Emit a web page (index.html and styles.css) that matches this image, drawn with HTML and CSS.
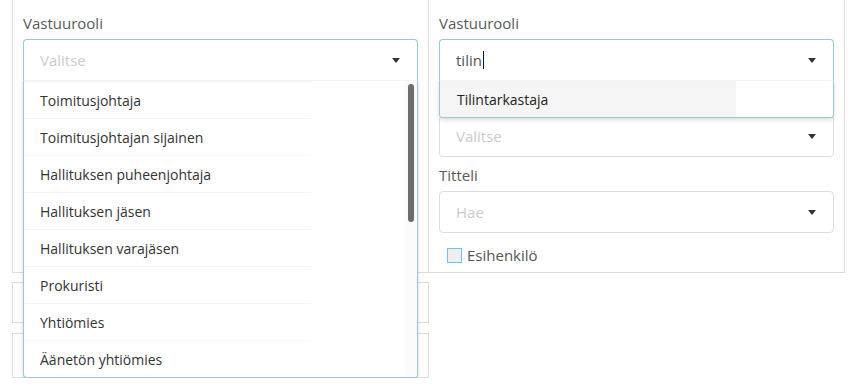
FILE: index.html
```html
<!DOCTYPE html>
<html lang="fi">
<head>
<meta charset="utf-8">
<title>Vastuurooli</title>
<link rel="stylesheet" href="styles.css">
</head>
<body>
<div class="page">
  <div class="col col-left">
    <div class="panel panel-left">
      <div class="field">
        <label class="label">Vastuurooli</label>
        <div class="select-wrap">
          <div class="select focused open">
            <span class="placeholder">Valitse</span>
            <span class="arrow"></span>
          </div>
          <div class="dropdown">
            <ul class="options">
              <li>Toimitusjohtaja</li>
              <li>Toimitusjohtajan sijainen</li>
              <li>Hallituksen puheenjohtaja</li>
              <li>Hallituksen jäsen</li>
              <li>Hallituksen varajäsen</li>
              <li>Prokuristi</li>
              <li>Yhtiömies</li>
              <li>Äänetön yhtiömies</li>
            </ul>
            <div class="scroll-track"><div class="scroll-thumb"></div></div>
          </div>
        </div>
      </div>
    </div>
    <div class="box box-1"></div>
    <div class="box box-2"></div>
  </div>
  <div class="col col-right">
    <div class="panel panel-right">
      <div class="field">
        <label class="label">Vastuurooli</label>
        <div class="select-wrap">
          <div class="select focused open">
            <span class="value">tilin</span><span class="cursor"></span>
            <span class="arrow"></span>
          </div>
          <div class="dropdown dropdown-short">
            <ul class="options">
              <li class="active">Tilintarkastaja</li>
            </ul>
          </div>
        </div>
      </div>
      <div class="field">
        <label class="label">&nbsp;</label>
        <div class="select">
          <span class="placeholder">Valitse</span>
          <span class="arrow"></span>
        </div>
      </div>
      <div class="field">
        <label class="label">Titteli</label>
        <div class="select">
          <span class="placeholder">Hae</span>
          <span class="arrow"></span>
        </div>
      </div>
      <div class="check-row">
        <span class="checkbox"></span>
        <span class="check-label">Esihenkilö</span>
      </div>
    </div>
  </div>
</div>
</body>
</html>
```

FILE: styles.css
```css
* { box-sizing: border-box; }

html, body {
  margin: 0;
  padding: 0;
  background: #fff;
}

body {
  font-family: "Open Sans", "Noto Sans", sans-serif;
  color: #555;
}

.page {
  display: flex;
  align-items: flex-start;
  padding-left: 12px;
}

.col-left { width: 417px; }
.col-right { width: 416px; }

.panel {
  height: 273px;
  padding: 13px 10px 0 10px;
  border-bottom: 1px solid #ddd;
}

.panel-left {
  border-left: 1px solid #ddd;
  border-right: 1px solid #ddd;
}

.panel-right {
  border-right: 1px solid #ddd;
}

.field { margin-bottom: 8px; }

.label {
  display: block;
  font-size: 15px;
  line-height: 20px;
  height: 20px;
  margin-bottom: 6px;
  color: #5a5a5a;
}

.select-wrap { position: relative; }

.select {
  position: relative;
  display: flex;
  align-items: center;
  height: 42px;
  padding: 0 16px;
  border: 1px solid #ddd;
  border-radius: 4px;
  font-size: 15px;
  background: #fff;
}

.select.focused { border-color: #96c8da; }
.select.open {
  border-bottom-color: #f7f7f7;
  border-bottom-left-radius: 0;
  border-bottom-right-radius: 0;
}

.placeholder { color: #cbcbcb; }
.value { color: #555; }

.cursor {
  display: inline-block;
  width: 1px;
  height: 18px;
  background: #111;
  margin-left: 1px;
}

.arrow {
  position: absolute;
  right: 17px;
  top: 50%;
  margin-top: -2px;
  width: 0;
  height: 0;
  border-left: 4.5px solid transparent;
  border-right: 4.5px solid transparent;
  border-top: 5px solid #333;
}

.dropdown {
  position: absolute;
  z-index: 10;
  left: 0;
  right: 0;
  top: 42px;
  background: #fff;
  border: 1px solid #96c8da;
  border-top: none;
  border-bottom-left-radius: 4px;
  border-bottom-right-radius: 4px;
  box-shadow: 0 2px 4px rgba(0, 0, 0, 0.14);
  overflow: hidden;
}

.options {
  list-style: none;
  margin: 0;
  padding: 0;
}

.options li {
  width: 287px;
  height: 37px;
  border-top: 1px solid #f4f4f4;
  padding-left: 16px;
  display: flex;
  align-items: center;
  font-size: 14px;
  color: #333;
}

.dropdown-short .options li {
  width: 296px;
  height: 36px;
  border-top: none;
  padding-left: 17px;
}

.options li.active {
  background: #f5f5f5;
  color: #222;
}

.scroll-track {
  position: absolute;
  top: 0;
  right: 0;
  bottom: 0;
  width: 12px;
  background: #fafafa;
}

.scroll-thumb {
  position: absolute;
  top: 3px;
  left: 3px;
  width: 6px;
  height: 138px;
  border-radius: 3px;
  background: #6d6d6d;
}

.check-row {
  display: flex;
  align-items: center;
  padding-left: 8px;
  margin-top: 12px;
}

.checkbox {
  display: inline-block;
  width: 15px;
  height: 15px;
  border: 1px solid #6cc4e8;
  background: #eee;
}

.check-label {
  margin-left: 5px;
  font-size: 15px;
  line-height: 20px;
  color: #555;
}

.box {
  border: 1px solid #ddd;
  margin-top: 10px;
}

.box-1 { height: 41px; margin-top: 9px; }
.box-2 { height: 45px; }
```
